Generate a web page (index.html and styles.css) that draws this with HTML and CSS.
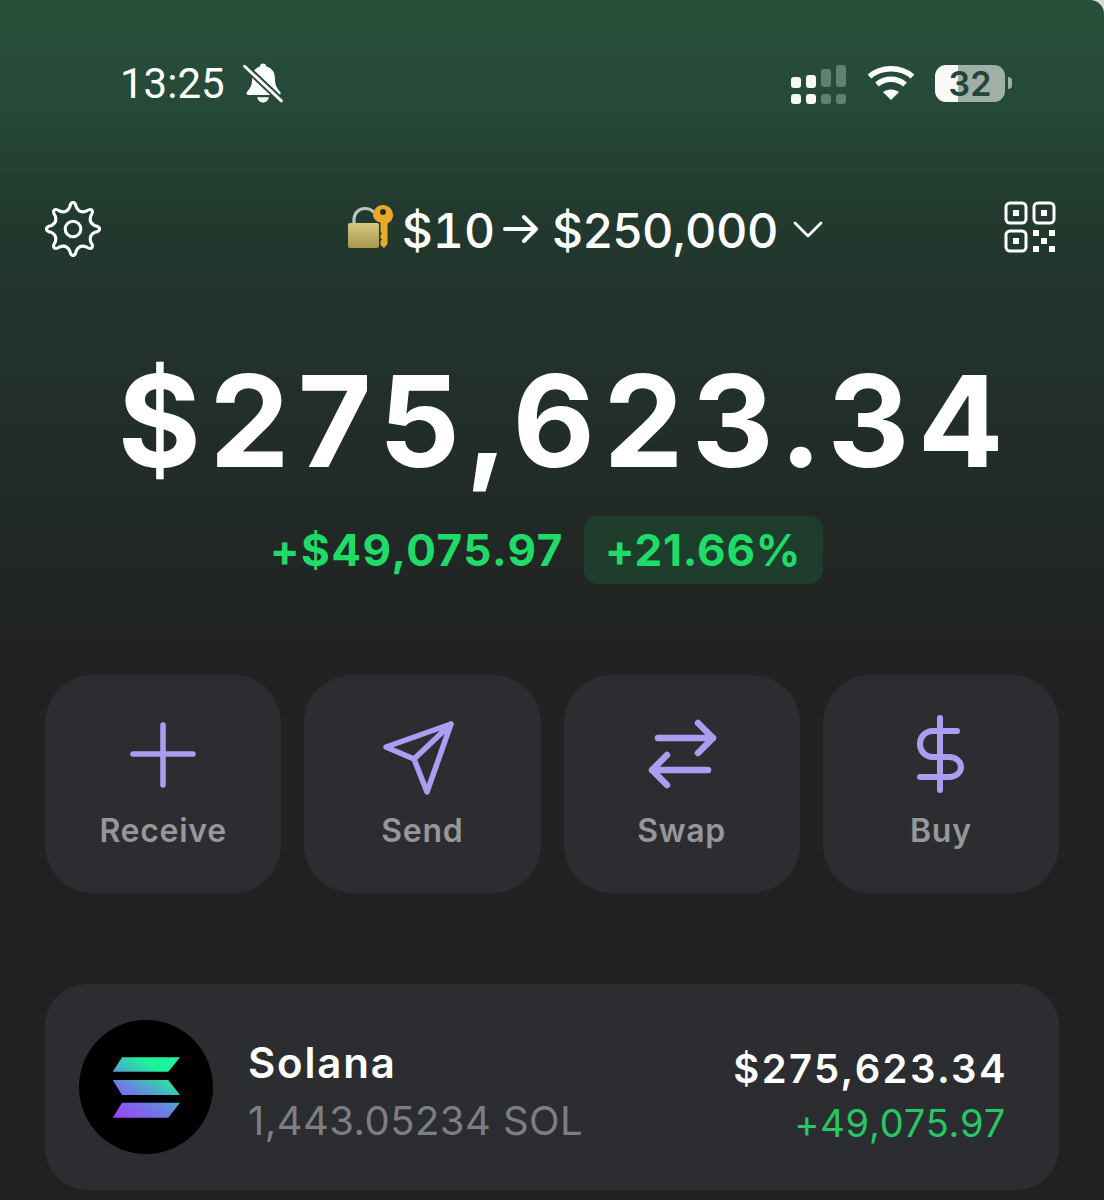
FILE: index.html
```html
<!DOCTYPE html>
<html lang="en">

<head>
    <meta charset="UTF-8">
    <meta name="viewport" content="width=device-width, initial-scale=1.0">
    <title>Wallet</title>
    <link rel="stylesheet" href="styles.css">
</head>

<body>
    <main class="screen">
        <div class="status-bar">
            <div class="status-left">
                <span class="status-time">13:25</span>
                <svg class="bell" width="42" height="42" viewBox="0 0 40 40">
                    <path d="M20 1.500c1.800 0 3 1.200 3.300 2.700 5 1.300 8 5.300 8 10.800 0 5 .9 8 2.500 10.200l2.700 3.600c.8 1.100 0 2.700-1.400 2.700H6c-1.500 0-2.300-1.600-1.400-2.700l2.700-3.600C8.900 23 9.700 20 9.700 15c0-5.500 3-9.500 7.300-10.800.3-1.500 1.300-2.700 3-2.700z" fill="#fff" />
                    <path d="M14.500 33.500c.5 3 2.700 5 5.500 5s5-2 5.500-5z" fill="#fff" />
                    <path d="M2.500 4l35 33" stroke="#26493a" stroke-width="6.500" />
                    <path d="M2.500 4l35 33" stroke="#fff" stroke-width="2.800" stroke-linecap="round" />
                </svg>
            </div>
            <div class="status-right">
                <svg width="58" height="42" viewBox="0 0 58 42">
                    <rect x="2" y="15" width="10" height="11" rx="3" fill="#f6f8f6" />
                    <rect x="17" y="13" width="10" height="13" rx="3" fill="#f6f8f6" />
                    <rect x="2" y="32" width="10" height="10" rx="3" fill="#f6f8f6" />
                    <rect x="17" y="32" width="10" height="10" rx="3" fill="#f6f8f6" />
                    <rect x="32" y="7" width="10" height="18" rx="3" fill="#5f8270" />
                    <rect x="47" y="3" width="10" height="22" rx="3" fill="#5f8270" />
                    <rect x="32" y="32" width="10" height="10" rx="3" fill="#5f8270" />
                    <rect x="47" y="32" width="10" height="10" rx="3" fill="#5f8270" />
                </svg>
                <svg class="wifi" width="48" height="36" viewBox="0 0 48 36" fill="none" stroke="#fff" stroke-width="5.500">
                    <path d="M2.500 11.500C14 1 34 1 45.500 11.500" />
                    <path d="M10 19.500c8-7 20-7 28 0" />
                    <path d="M24 35l-8-8c4.500-3.500 11.500-3.500 16 0z" fill="#fff" stroke="none" />
                </svg>
                <div class="battery"><span class="battery-level">32</span></div>
                <div class="battery-cap"></div>
            </div>
        </div>

        <div class="top-bar">
            <svg class="gear" width="56" height="56" viewBox="0 0 54 54" fill="none" stroke="#fff" stroke-width="3">
                <path d="M23.940 5.610C25 0 29 0 30.060 5.610Q33.120 12.220 39.960 9.710C44.700 6.500 47.500 9.300 44.290 14.040Q41.780 20.880 48.390 23.940C54 25 54 29 48.390 30.060Q41.780 33.120 44.290 39.960C47.500 44.700 44.700 47.500 39.960 44.290Q33.120 41.780 30.060 48.390C29 54 25 54 23.940 48.390Q20.880 41.780 14.040 44.290C9.300 47.500 6.500 44.700 9.710 39.960Q12.220 33.120 5.610 30.060C0 29 0 25 5.610 23.940Q12.220 20.880 9.710 14.040C6.500 9.300 9.300 6.500 14.040 9.710Q20.880 12.220 23.940 5.610z" />
                <circle cx="27" cy="27" r="7.500" />
            </svg>
            <div class="account">
                <svg class="lock-key" width="46" height="46" viewBox="0 0 46 46">
                    <defs>
                        <linearGradient id="lock-body" x1="0" y1="0" x2="0" y2="1">
                            <stop offset="0" stop-color="#d6c97f" />
                            <stop offset="1" stop-color="#a8974f" />
                        </linearGradient>
                    </defs>
                    <path d="M6 21v-5C6 8 12 4.500 17 4.500c4 0 7 1.500 9 4" fill="none" stroke="#b9c1c8" stroke-width="3.200" />
                    <rect x="0" y="19" width="31" height="25" rx="2" fill="url(#lock-body)" />
                    <path d="M35 1c5.500 0 10 4.500 10 10 0 4-2.300 7-5.500 8.500V40l-3.500 4-3.500-3v-4l1.500-1.500-1.500-1.500v-3l1.500-1.500-1.500-1.500v-9.500C29.300 18 25 15 25 11c0-5.500 4.500-10 10-10z" fill="#e9aa2c" />
                    <circle cx="35" cy="8" r="3" fill="#2b2b1c" />
                </svg>
                <span class="account-name tnum">$10</span>
                <svg class="arrow" width="36" height="30" viewBox="0 0 36 30" fill="none" stroke="#fff" stroke-width="4" stroke-linecap="round" stroke-linejoin="round">
                    <path d="M2 15h31M21 3l12 12-12 12" />
                </svg>
                <span class="account-name">$250,000</span>
                <svg class="chevron" width="30" height="20" viewBox="0 0 30 20" fill="none" stroke="#fff" stroke-width="2.800" stroke-linecap="round" stroke-linejoin="round">
                    <path d="M2 4l13 13L28 4" />
                </svg>
            </div>
            <svg class="qr" width="52" height="52" viewBox="0 0 52 52" fill="none" stroke="#fff" stroke-width="3">
                <rect x="2" y="2" width="20" height="20" rx="4" />
                <rect x="30" y="2" width="20" height="20" rx="4" />
                <rect x="2" y="30" width="20" height="20" rx="4" />
                <g fill="#fff" stroke="none">
                    <rect x="9" y="9" width="6" height="6" />
                    <rect x="37" y="9" width="6" height="6" />
                    <rect x="9" y="37" width="6" height="6" />
                    <rect x="29" y="29" width="6" height="6" />
                    <rect x="45" y="29" width="6" height="6" />
                    <rect x="37" y="37" width="6" height="6" />
                    <rect x="29" y="45" width="6" height="6" />
                    <rect x="45" y="45" width="6" height="6" />
                </g>
            </svg>
        </div>

        <div class="balance">$275,623.34</div>
        <div class="change">
            <span class="change-amount">+$49,075.97</span>
            <span class="change-percent">+21.66%</span>
        </div>

        <div class="actions">
            <div class="action">
                <svg width="70" height="80" viewBox="0 0 70 80" fill="none" stroke="#ab9ef2" stroke-width="5.500" stroke-linecap="round" stroke-linejoin="round">
                    <path d="M35 10v60M5 39h60" />
                </svg>
                <span class="action-label">Receive</span>
            </div>
            <div class="action">
                <svg width="78" height="80" viewBox="0 0 78 80" fill="none" stroke="#ab9ef2" stroke-width="5.500" stroke-linecap="round" stroke-linejoin="round">
                    <path d="M68 9L3 32l28 12 13 33zM31 44L68 9" />
                </svg>
                <span class="action-label">Send</span>
            </div>
            <div class="action">
                <svg width="70" height="80" viewBox="0 0 70 80" fill="none" stroke="#ab9ef2" stroke-width="6.500" stroke-linecap="round" stroke-linejoin="round">
                    <path d="M11 23h55M51 8l15 15-15 15M61 55H5M20 40L5 55l15 15" />
                </svg>
                <span class="action-label">Swap</span>
            </div>
            <div class="action">
                <svg width="70" height="80" viewBox="0 0 70 80" fill="none" stroke="#ab9ef2" stroke-width="6" stroke-linecap="round" stroke-linejoin="round">
                    <path d="M34 3v72M51 16H27C19 16 14 22 14 29s5 13 13 13h16c7 0 12 4.500 12 10s-5 10-12 10H14" />
                </svg>
                <span class="action-label">Buy</span>
            </div>
        </div>

        <div class="token">
            <svg class="token-logo" width="134" height="134" viewBox="0 0 134 134">
                <defs>
                    <linearGradient id="sol" gradientUnits="userSpaceOnUse" x1="34" y1="97" x2="67" y2="42">
                        <stop offset="0" stop-color="#a03ffc" />
                        <stop offset="0.5" stop-color="#6a80e4" />
                        <stop offset="1" stop-color="#1cf29a" />
                    </linearGradient>
                </defs>
                <circle cx="67" cy="67" r="67" fill="#000" />
                <path d="M33.700 51.700L43 37.300h58L89.300 51.700zM33.700 60h55.600L101 75H43zM33.700 97.700L43 82.700h58L89.300 97.700z" fill="url(#sol)" />
            </svg>
            <div class="token-info">
                <span class="token-name">Solana</span>
                <span class="token-amount">1,443.05234 SOL</span>
            </div>
            <div class="token-values">
                <span class="token-value">$275,623.34</span>
                <span class="token-change">+49,075.97</span>
            </div>
        </div>
    </main>
</body>

</html>
```

FILE: styles.css
```css
* {
    margin: 0;
    padding: 0;
    box-sizing: border-box;
}

body {
    background-color: #d9d9d9;
    font-family: Inter, "Liberation Sans", sans-serif;
    color: #fff;
}

.tnum {
    font-variant-numeric: tabular-nums;
}

.screen {
    width: 1104px;
    height: 1200px;
    overflow: hidden;
    padding: 60px 45px 0;
    border-top-right-radius: 14px;
    background: linear-gradient(to bottom, #27503a 0, #264a39 100px, #22392e 220px, #222f2a 400px, #212725 560px, #212221 680px, #202120 100%);
}

/* status bar */
.status-bar {
    display: flex;
    justify-content: space-between;
    align-items: center;
    height: 46px;
    padding: 0 47px 0 75px;
}

.status-left,
.status-right {
    display: flex;
    align-items: center;
}

.status-time {
    font-family: Roboto, sans-serif;
    font-size: 42px;
    line-height: 46px;
    width: 122px;
    padding-top: 2px;
}

.wifi {
    margin: 0 20px;
}

.battery {
    display: flex;
    align-items: center;
    justify-content: center;
    width: 70px;
    height: 37px;
    border-radius: 11px;
    background: linear-gradient(to right, #f7f8f7 33%, #9fb0a6 33%);
}

.battery-level {
    font-size: 34px;
    font-weight: 600;
    color: #24463a;
}

.battery-cap {
    width: 4px;
    height: 12px;
    margin-left: 3px;
    border-radius: 0 4px 4px 0;
    background-color: #9fb0a6;
}

/* account row */
.top-bar {
    display: flex;
    align-items: center;
    justify-content: space-between;
    margin-top: 95px;
    height: 56px;
    padding-right: 3px;
}

.qr {
    margin-bottom: 4px;
}

.account {
    display: flex;
    align-items: center;
    margin-left: 66px;
}

.account-name {
    padding-top: 4px;
    font-size: 48px;
    font-weight: 550;
    line-height: 56px;
}

.lock-key {
    margin: 0 8px 4px 0;
}

.arrow {
    margin: 0 13px 0 8px;
}

.chevron {
    margin-left: 15px;
}

/* balance */
.balance {
    margin-top: 97px;
    padding-left: 26px;
    font-size: 127px;
    font-weight: 700;
    line-height: 134px;
    letter-spacing: 8.4px;
    text-align: center;
    white-space: nowrap;
}

.change {
    display: flex;
    align-items: center;
    justify-content: center;
    gap: 20px;
    margin-top: 28px;
    padding-right: 11px;
}

.change-amount,
.change-percent {
    font-size: 44px;
    font-weight: 650;
    letter-spacing: 1.5px;
    color: #1fdb68;
}

.change-percent {
    padding: 7px 22px 7px 21px;
    border-radius: 14px;
    letter-spacing: 0.8px;
    background-color: #1f3d2c;
}

/* action buttons */
.actions {
    display: grid;
    grid-template-columns: repeat(4, 1fr);
    grid-gap: 23px;
    margin-top: 91px;
}

.action {
    display: flex;
    flex-direction: column;
    align-items: center;
    height: 218px;
    padding-top: 40px;
    border-radius: 48px;
    background-color: #2c2d31;
}

.action-label {
    margin-top: 16px;
    font-size: 32px;
    font-weight: 600;
    line-height: 40px;
    letter-spacing: 0.7px;
    color: #97979a;
}

/* token row */
.token {
    display: flex;
    align-items: center;
    height: 206px;
    margin-top: 91px;
    padding: 0 51px 0 34px;
    border-radius: 42px;
    background-color: #2c2d31;
}

.token-info {
    display: flex;
    flex-direction: column;
    margin-left: 35px;
    padding-top: 10px;
}

.token-name {
    font-size: 42px;
    font-weight: 600;
    line-height: 58px;
    letter-spacing: 1.8px;
}

.token-amount {
    font-size: 40px;
    line-height: 58px;
    letter-spacing: 0.45px;
    color: #7d7e83;
}

.token-values {
    display: flex;
    flex-direction: column;
    align-items: flex-end;
    margin-left: auto;
    padding-top: 18px;
}

.token-value {
    font-size: 40px;
    font-weight: 600;
    line-height: 54px;
    letter-spacing: 2.4px;
}

.token-change {
    padding-right: 2px;
    font-size: 38px;
    line-height: 54px;
    letter-spacing: 0.8px;
    color: #25c865;
}
```
